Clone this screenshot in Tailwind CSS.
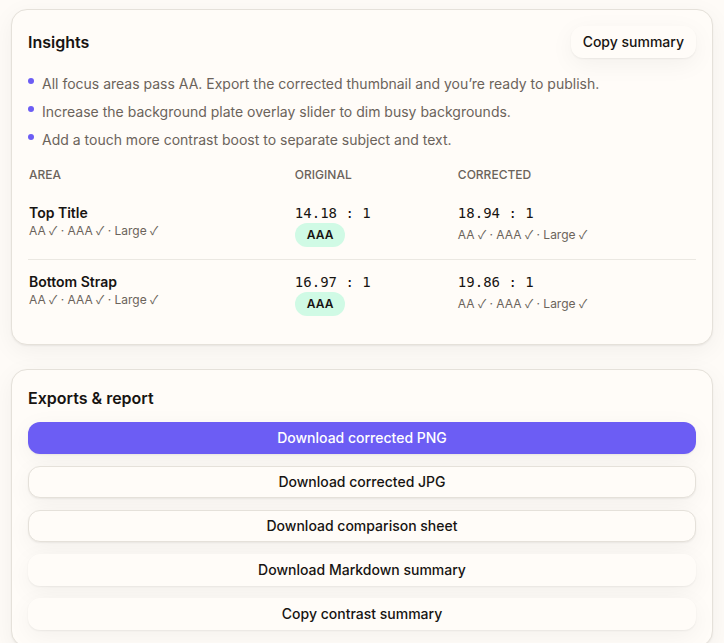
<!DOCTYPE html>
<html lang="en">
<head>
<meta charset="utf-8">
<meta name="viewport" content="width=device-width, initial-scale=1">
<title>Contrast report</title>
<script src="https://cdn.jsdelivr.net/npm/@tailwindcss/browser@4"></script>
</head>
<body class="bg-[#fefbf7] font-['Inter',sans-serif] text-sm text-[#171412]">
<main class="flex flex-col gap-6 px-[11px] py-[9px]">
  <section aria-labelledby="insights" class="rounded-2xl border border-[#e5e1da] bg-[#fffcf8] p-4 shadow-[0_1px_2px_rgba(15,15,20,0.06),0_6px_24px_rgba(15,15,20,0.05)]">
    <header class="flex items-center justify-between">
      <h2 id="insights" class="text-base font-semibold">Insights</h2>
      <button type="button" class="h-8 rounded-xl bg-[#fffcf8] px-3 font-medium shadow-[0_1px_2px_rgba(15,15,20,0.06),0_6px_24px_rgba(15,15,20,0.05)]">Copy summary</button>
    </header>
    <ul class="mt-4 flex flex-col gap-2 text-[#6b635b]">
      <li class="flex gap-2"><span class="mt-1 size-1.5 shrink-0 rounded-full bg-[#6c5df4]"></span>All focus areas pass AA. Export the corrected thumbnail and you’re ready to publish.</li>
      <li class="flex gap-2"><span class="mt-1 size-1.5 shrink-0 rounded-full bg-[#6c5df4]"></span>Increase the background plate overlay slider to dim busy backgrounds.</li>
      <li class="flex gap-2"><span class="mt-1 size-1.5 shrink-0 rounded-full bg-[#6c5df4]"></span>Add a touch more contrast boost to separate subject and text.</li>
    </ul>
    <table class="mt-4 w-full table-fixed text-left">
      <thead class="text-xs text-[#6b635b] uppercase">
        <tr>
          <th scope="col" class="w-[39.8%] px-px pt-px pb-2 font-medium">Area</th>
          <th scope="col" class="w-[24.4%] px-px pt-px pb-2 font-medium">Original</th>
          <th scope="col" class="px-px pt-px pb-2 font-medium">Corrected</th>
        </tr>
      </thead>
      <tbody class="align-top">
        <tr class="border-b border-[#ebe8e2]">
          <td class="px-px py-3"><div class="font-semibold">Top Title</div><div class="text-xs text-[#6b635b]">AA <span class="font-['Noto_Sans_CJK_JP',sans-serif] leading-none">✓</span> · AAA <span class="font-['Noto_Sans_CJK_JP',sans-serif] leading-none">✓</span> · Large <span class="font-['Noto_Sans_CJK_JP',sans-serif] leading-none">✓</span></div></td>
          <td class="px-px py-3"><div class="font-['DejaVu_Sans_Mono',monospace]">14.18 : 1</div><div class="flex"><span class="rounded-full bg-[#d0fae5] px-3 text-xs leading-6 font-semibold">AAA</span></div></td>
          <td class="px-px py-3"><div class="font-['DejaVu_Sans_Mono',monospace]">18.94 : 1</div><div class="text-xs leading-6 text-[#6b635b]">AA <span class="font-['Noto_Sans_CJK_JP',sans-serif] leading-none">✓</span> · AAA <span class="font-['Noto_Sans_CJK_JP',sans-serif] leading-none">✓</span> · Large <span class="font-['Noto_Sans_CJK_JP',sans-serif] leading-none">✓</span></div></td>
        </tr>
        <tr>
          <td class="px-px py-3"><div class="font-semibold">Bottom Strap</div><div class="text-xs text-[#6b635b]">AA <span class="font-['Noto_Sans_CJK_JP',sans-serif] leading-none">✓</span> · AAA <span class="font-['Noto_Sans_CJK_JP',sans-serif] leading-none">✓</span> · Large <span class="font-['Noto_Sans_CJK_JP',sans-serif] leading-none">✓</span></div></td>
          <td class="px-px py-3"><div class="font-['DejaVu_Sans_Mono',monospace]">16.97 : 1</div><div class="flex"><span class="rounded-full bg-[#d0fae5] px-3 text-xs leading-6 font-semibold">AAA</span></div></td>
          <td class="px-px py-3"><div class="font-['DejaVu_Sans_Mono',monospace]">19.86 : 1</div><div class="text-xs leading-6 text-[#6b635b]">AA <span class="font-['Noto_Sans_CJK_JP',sans-serif] leading-none">✓</span> · AAA <span class="font-['Noto_Sans_CJK_JP',sans-serif] leading-none">✓</span> · Large <span class="font-['Noto_Sans_CJK_JP',sans-serif] leading-none">✓</span></div></td>
        </tr>
      </tbody>
    </table>
  </section>
  <section aria-labelledby="exports" class="rounded-2xl border border-[#e5e1da] bg-[#fffcf8] p-4 shadow-[0_1px_2px_rgba(15,15,20,0.06),0_6px_24px_rgba(15,15,20,0.05)]">
    <h2 id="exports" class="text-base font-semibold">Exports &amp; report</h2>
    <div class="mt-3 flex flex-col gap-3 font-medium">
      <button type="button" class="h-8 rounded-xl bg-[#6c5df4] text-white shadow-[0_1px_2px_rgba(15,15,20,0.06),0_6px_24px_rgba(15,15,20,0.05)]">Download corrected PNG</button>
      <button type="button" class="h-8 rounded-xl border border-[#e5e1da] bg-[#fffcf8] shadow-[0_1px_2px_rgba(15,15,20,0.06),0_6px_24px_rgba(15,15,20,0.05)]">Download corrected JPG</button>
      <button type="button" class="h-8 rounded-xl border border-[#e5e1da] bg-[#fffcf8] shadow-[0_1px_2px_rgba(15,15,20,0.06),0_6px_24px_rgba(15,15,20,0.05)]">Download comparison sheet</button>
      <button type="button" class="h-8 rounded-xl bg-[#fffcf8] shadow-[0_1px_2px_rgba(15,15,20,0.06),0_6px_24px_rgba(15,15,20,0.05)]">Download Markdown summary</button>
      <button type="button" class="h-8 rounded-xl bg-[#fffcf8] shadow-[0_1px_2px_rgba(15,15,20,0.06),0_6px_24px_rgba(15,15,20,0.05)]">Copy contrast summary</button>
    </div>
  </section>
</main>
</body>
</html>
